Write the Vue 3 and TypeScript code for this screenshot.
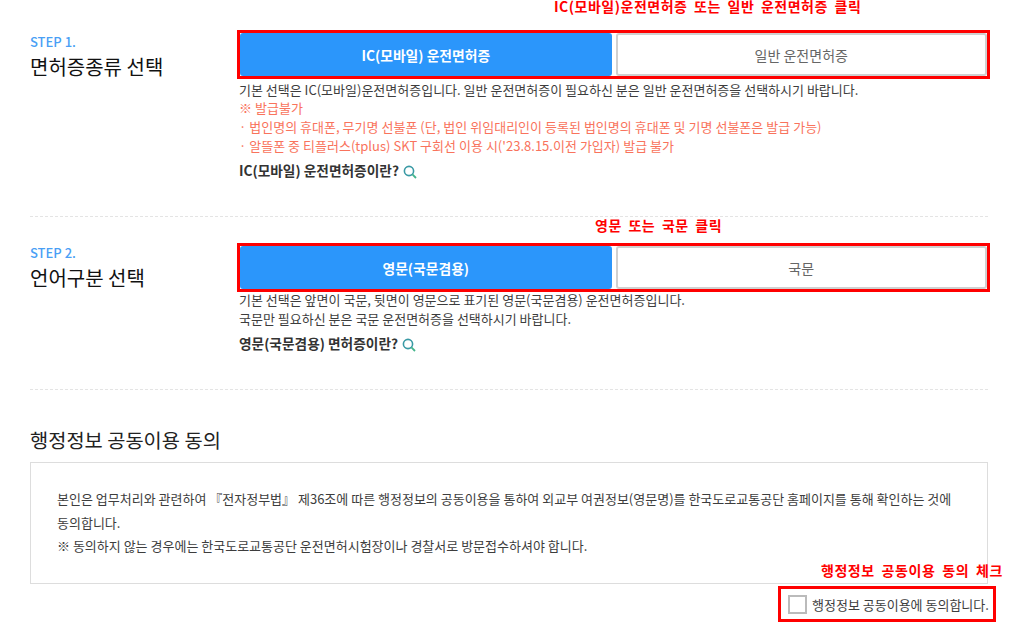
<script setup lang="ts">
const notes = [
  '· 법인명의 휴대폰, 무기명 선불폰 (단, 법인 위임대리인이 등록된 법인명의 휴대폰 및 기명 선불폰은 발급 가능)',
  "· 알뜰폰 중 티플러스(tplus) SKT 구회선 이용 시('23.8.15.이전 가입자) 발급 불가",
]
</script>

<template>
  <main class="page">
    <section class="step step-one">
      <div class="step-head">
        <p class="step-no">STEP 1.</p>
        <h2 class="step-title">면허증종류 선택</h2>
      </div>
      <div class="step-body">
        <p class="callout callout-one">IC(모바일)운전면허증 또는 일반 운전면허증 클릭</p>
        <div class="toggle-frame">
          <button class="toggle active" type="button">IC(모바일) 운전면허증</button>
          <button class="toggle" type="button">일반 운전면허증</button>
        </div>
        <p class="line">기본 선택은 IC(모바일)운전면허증입니다. 일반 운전면허증이 필요하신 분은 일반 운전면허증을 선택하시기 바랍니다.</p>
        <div class="warn-block">
          <p class="line warn">※ 발급불가</p>
          <p v-for="n in notes" :key="n" class="line warn">{{ n }}</p>
        </div>
        <p class="more">
          IC(모바일) 운전면허증이란?
          <svg class="lens" viewBox="0 0 14 14" width="14" height="14" aria-hidden="true">
            <circle cx="6" cy="6" r="4.6" fill="none" stroke="#3a9aa5" stroke-width="1.6" />
            <path d="M9.4 9.4 13 13" stroke="#45b58c" stroke-width="1.8" fill="none" />
          </svg>
        </p>
      </div>
    </section>

    <section class="step step-two">
      <div class="step-head">
        <p class="step-no">STEP 2.</p>
        <h2 class="step-title">언어구분 선택</h2>
      </div>
      <div class="step-body">
        <p class="callout callout-two">영문 또는 국문 클릭</p>
        <div class="toggle-frame">
          <button class="toggle active" type="button">영문(국문겸용)</button>
          <button class="toggle" type="button">국문</button>
        </div>
        <p class="line">기본 선택은 앞면이 국문, 뒷면이 영문으로 표기된 영문(국문겸용) 운전면허증입니다.</p>
        <p class="line">국문만 필요하신 분은 국문 운전면허증을 선택하시기 바랍니다.</p>
        <p class="more">
          영문(국문겸용) 면허증이란?
          <svg class="lens" viewBox="0 0 14 14" width="14" height="14" aria-hidden="true">
            <circle cx="6" cy="6" r="4.6" fill="none" stroke="#3a9aa5" stroke-width="1.6" />
            <path d="M9.4 9.4 13 13" stroke="#45b58c" stroke-width="1.8" fill="none" />
          </svg>
        </p>
      </div>
    </section>

    <section class="consent">
      <h2 class="consent-title">행정정보 공동이용 동의</h2>
      <div class="consent-box">
        <p>본인은 업무처리와 관련하여 『전자정부법』 제36조에 따른 행정정보의 공동이용을 통하여 외교부 여권정보(영문명)를 한국도로교통공단 홈페이지를 통해 확인하는 것에<br />동의합니다.</p>
        <p>※ 동의하지 않는 경우에는 한국도로교통공단 운전면허시험장이나 경찰서로 방문접수하셔야 합니다.</p>
      </div>
      <div class="agree-row">
        <p class="callout callout-three">행정정보 공동이용 동의 체크</p>
        <label class="agree">
          <span class="check"></span>
          <span>행정정보 공동이용에 동의합니다.</span>
        </label>
      </div>
    </section>
  </main>
</template>

<style scoped>
* { box-sizing: border-box; }
.page {
  width: 1024px;
  height: 627px;
  overflow: hidden;
  padding: 0 36px 0 30px;
  background: #fff;
  color: #333;
  font-family: "Noto Sans CJK KR", "Noto Sans", sans-serif;
}
p, h2 { margin: 0; }
.step {
  display: flex;
  border-bottom: 1px dashed #e4e4e4;
}
.step-one { height: 217px; padding-top: 30px; }
.step-two { height: 173px; padding-top: 26px; }
.step-head { width: 208px; flex: none; padding-top: 3px; }
.step-two .step-head { padding-top: 1px; }
.step-no {
  font-size: 13px;
  line-height: 18px;
  font-weight: 500;
  color: #4a9ff5;
}
.step-title {
  margin-top: 2px;
  font-size: 20px;
  line-height: 28px;
  font-weight: 400;
  color: #111;
}
.step-body { position: relative; flex: 1; }
.toggle-frame {
  display: flex;
  gap: 4px;
  width: 753px;
  height: 49px;
  margin-left: -1px;
  margin-bottom: 1px;
  border: 3px solid #f00;
}
.step-two .toggle-frame { margin-bottom: -2px; }
.toggle {
  flex: 1;
  height: 43px;
  border: 2px solid #d0d0d0;
  border-radius: 3px;
  background: #fff;
  color: #666;
  font: 400 14px "Noto Sans CJK KR", sans-serif;
}
.active {
  border-color: #2b96fb;
  background: #2b96fb;
  color: #fff;
  font-size: 13.8px;
  font-weight: 700;
}
.line {
  font-size: 13px;
  line-height: 19px;
  padding-left: 1px;
  color: #3d3d3d;
  white-space: nowrap;
}
.warn-block { margin-top: -1px; margin-bottom: 1px; }
.warn { color: #f9735c; letter-spacing: 0.02px; }
.more {
  display: flex;
  align-items: center;
  gap: 4px;
  margin-top: 6px;
  padding-left: 1px;
  font-size: 13.7px;
  line-height: 19px;
  font-weight: 700;
  color: #333;
}
.lens { margin-top: 3px; }
.callout {
  position: absolute;
  font-size: 14px;
  line-height: 18px;
  font-weight: 700;
  color: #f00;
  white-space: nowrap;
  letter-spacing: 0.5px;
  word-spacing: 3px;
}
.callout-one { top: -30px; left: 316px; line-height: 13px; }
.callout-two { top: -27px; left: 357px; }
.callout-three { top: -25px; right: -7px; letter-spacing: 0.6px; }
.consent { padding-top: 37px; }
.consent-title {
  font-size: 19.8px;
  line-height: 26px;
  font-weight: 400;
  color: #222;
}
.consent-box {
  margin-top: 9px;
  height: 122px;
  padding: 24px 26px 0;
  border: 1px solid #ddd;
  width: 958px;
  font-size: 13px;
  line-height: 23.5px;
  color: #3d3d3d;
}
.agree-row {
  position: relative;
  display: flex;
  justify-content: flex-end;
  width: 966px;
  margin-top: 2px;
}
.agree {
  display: flex;
  align-items: center;
  gap: 5px;
  width: 218px;
  height: 36px;
  padding-left: 7px;
  border: 3px solid #f00;
  font-size: 13px;
  color: #3d3d3d;
  white-space: nowrap;
}
.check {
  width: 19px;
  height: 19px;
  border: 2px solid #bbb;
  background: #fff;
}
</style>
